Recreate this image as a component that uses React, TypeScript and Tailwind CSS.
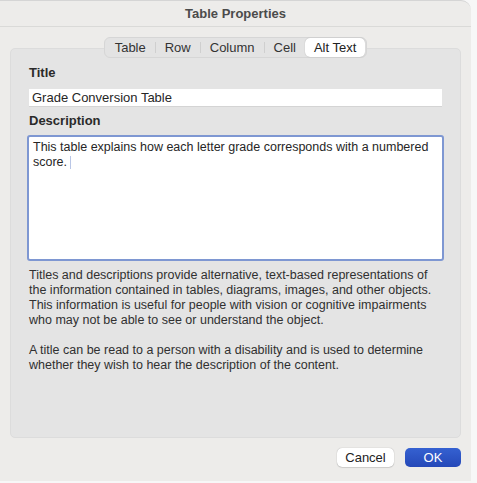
import React from 'react';

const tabs = ['Table', 'Row', 'Column', 'Cell', 'Alt Text'];

export default function App() {
  const active = 'Alt Text';

  return (
    <div className="w-[477px] h-[483px] bg-[#f7f7f7] font-['Liberation_Sans',sans-serif] text-[#262626]">
      <div className="w-[471px] h-[481px] bg-[#edecea] rounded-tr-[10px] border-t border-[#d5d5d5] flex flex-col">
        {/* title bar */}
        <div className="h-[26px] shrink-0 border-b border-[#dadad8] flex items-center justify-center text-[13px] font-bold text-[#4b4b4b]">
          Table Properties
        </div>

        {/* group box */}
        <div className="relative px-[10px] pt-[21px]">
          <div className="absolute left-0 right-0 top-[10px] flex justify-center z-10">
            <div className="flex items-center h-[21px] rounded-[6px] bg-[#e3e3e3] border border-[#d6d6d6] px-[1px] text-[13px] text-[#333]">
              {tabs.map((t, i) => {
                const isActive = t === active;
                const nextActive = tabs[i + 1] === active;
                const last = i === tabs.length - 1;
                return (
                  <div key={t} className="flex items-center h-full">
                    <div
                      className={
                        isActive
                          ? 'h-[19px] px-[9px] flex items-center bg-white rounded-[5px] shadow-[0_0_1px_rgba(0,0,0,0.3)] text-[#222]'
                          : 'h-[19px] px-[9px] flex items-center'
                      }
                    >
                      {t}
                    </div>
                    {!last && !isActive && !nextActive && <div className="w-px h-[11px] bg-[#cfcfcf]" />}
                  </div>
                );
              })}
            </div>
          </div>

          <div className="h-[390px] rounded-[5px] bg-[#e4e4e4] border border-[#dcdcdc] pt-[16px] px-[18px]">
            <div className="text-[13px] font-bold text-[#2a2a2a] leading-[16px]">Title</div>
            <div className="mt-[8px] h-[18px] bg-white border-b border-[#d4d4d4] px-[3px] flex items-center text-[13px] text-[#262626]">
              Grade Conversion Table
            </div>

            <div className="mt-[6px] text-[13px] font-bold text-[#2a2a2a] leading-[16px]">Description</div>
            <div className="mt-[6px] -mx-[2px] h-[126px] bg-white border-2 border-[#7e97d2] rounded-[3px] px-[4px] pt-[3px] text-[12.5px] leading-[15px] text-[#262626]">
              This table explains how each letter grade corresponds with a numbered score.
              <span className="inline-block w-px h-[13px] bg-[#b9c6e6] align-middle ml-[3px]" />
            </div>

            <div className="mt-[7px] text-[12.5px] leading-[15px] text-[#303030]">
              <p>
                Titles and descriptions provide alternative, text-based representations of the information
                contained in tables, diagrams, images, and other objects. This information is useful for people
                with vision or cognitive impairments who may not be able to see or understand the object.
              </p>
              <p className="mt-[15px]">
                A title can be read to a person with a disability and is used to determine whether they wish to
                hear the description of the content.
              </p>
            </div>
          </div>
        </div>

        {/* buttons */}
        <div className="flex justify-end gap-[11px] pr-[10px] mt-[10px]">
          <button className="w-[57px] h-[19px] rounded-[5px] bg-white shadow-[0_0_1px_rgba(0,0,0,0.35),0_1px_1px_rgba(0,0,0,0.1)] text-[13px] text-[#222] leading-none">
            Cancel
          </button>
          <button className="w-[56px] h-[19px] rounded-[5px] bg-gradient-to-b from-[#3561d1] to-[#2548b8] text-[13px] text-white leading-none">
            OK
          </button>
        </div>
      </div>
    </div>
  );
}
